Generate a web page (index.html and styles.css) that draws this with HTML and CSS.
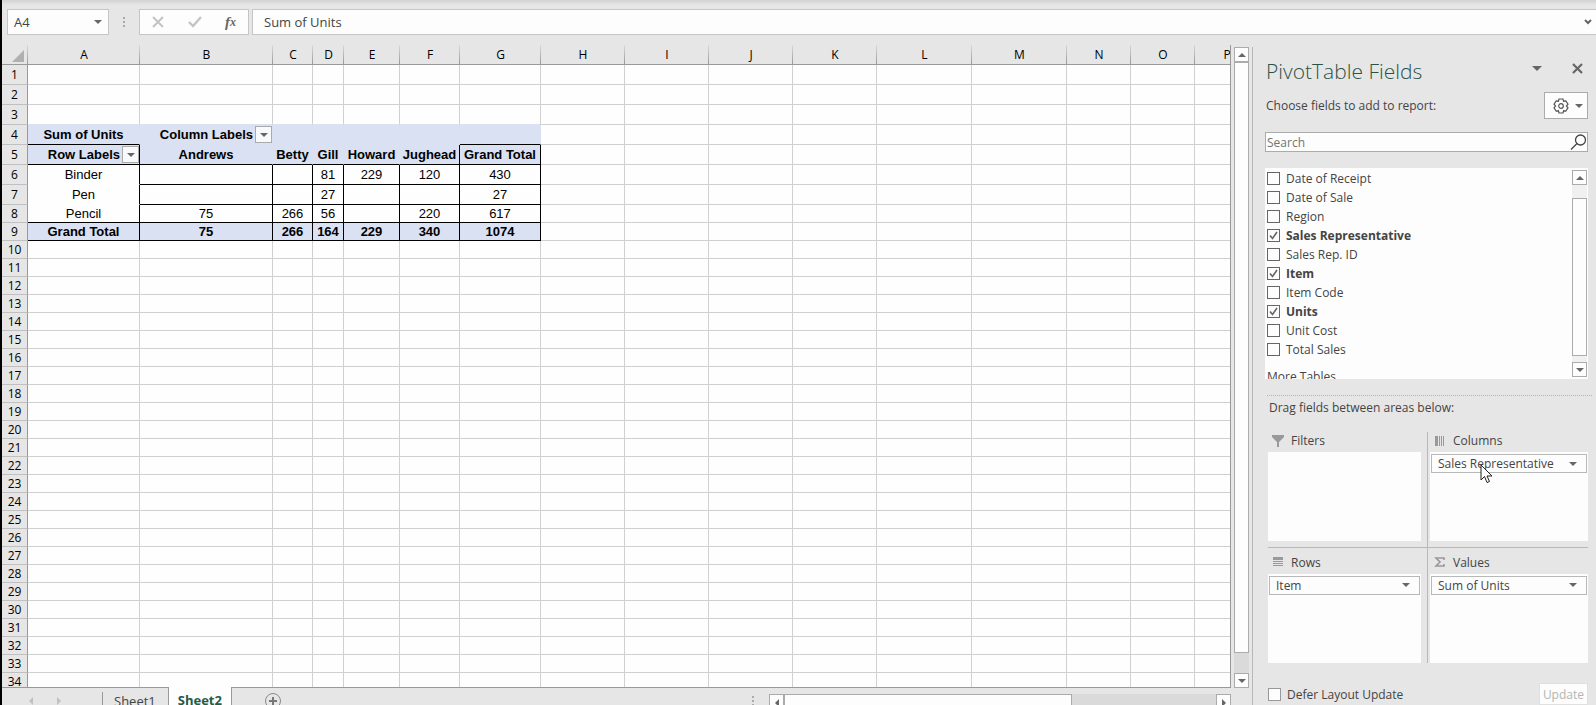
FILE: index.html
```html
<!DOCTYPE html>
<html lang="en">
<head>
  <meta charset="UTF-8">
  <meta name="viewport" content="width=device-width, initial-scale=1.0">
  <title>PivotTable Fields</title>
  <link rel="stylesheet" href="styles.css">
</head>
<body>
  <!-- Formula bar -->
  <header class="formula-bar">
    <div class="name-box">
      <input class="name-input" type="text" value="A4" aria-label="Name box">
      <button class="plain-btn" type="button" aria-label="Open name list"><span class="caret"></span></button>
    </div>
    <div class="dots"><span></span><span></span><span></span></div>
    <div class="formula-buttons">
      <button class="plain-btn" type="button" aria-label="Cancel">
        <svg width="12" height="12" viewBox="0 0 12 12"><path d="M1 1L11 11M11 1L1 11" stroke="#c4c4c4" stroke-width="2" fill="none"/></svg>
      </button>
      <button class="plain-btn" type="button" aria-label="Enter">
        <svg width="14" height="12" viewBox="0 0 14 12"><path d="M1 6L5 10L13 1" stroke="#c4c4c4" stroke-width="2.4" fill="none"/></svg>
      </button>
      <button class="plain-btn fx" type="button" aria-label="Insert function">f<small>x</small></button>
    </div>
    <div class="formula-field">
      <input class="formula-input" type="text" value="Sum of Units" aria-label="Formula">
      <button class="plain-btn" type="button" aria-label="Expand formula bar">
        <svg width="8" height="6" viewBox="0 0 8 6"><path d="M1 1L4 4L7 1" stroke="#666" stroke-width="2" fill="none"/></svg>
      </button>
    </div>
  </header>

  <main class="main">
    <section class="workbook">
      <div class="grid-area">
        <div class="grid-wrap">
          <table class="sheet">
            <colgroup id="cols"></colgroup>
            <thead><tr id="letters"></tr></thead>
            <tbody id="rows"></tbody>
          </table>
        </div>
        <div class="scroll-y">
          <button class="scroll-btn" type="button" aria-label="Scroll up"><span class="tri up"></span></button>
          <div class="thumb-y"></div>
          <button class="scroll-btn" type="button" aria-label="Scroll down"><span class="tri down"></span></button>
        </div>
      </div>

      <!-- Sheet tabs -->
      <footer class="tab-bar">
        <div class="tab-nav">
          <button class="plain-btn" type="button" aria-label="Previous sheet"><span class="tri left faint"></span></button>
          <button class="plain-btn" type="button" aria-label="Next sheet"><span class="tri right faint"></span></button>
        </div>
        <button class="tab" type="button">Sheet1</button>
        <button class="tab active" type="button">Sheet2</button>
        <div class="tab-rest">
          <button class="plain-btn" type="button" aria-label="New sheet">
            <svg width="18" height="18" viewBox="0 0 18 18"><circle cx="9" cy="9" r="7.5" fill="none" stroke="#8a8a8a"/><path d="M9 5V13M5 9H13" stroke="#777" stroke-width="2"/></svg>
          </button>
          <div class="dots tab-dots"><span></span><span></span><span></span></div>
          <div class="scroll-x">
            <button class="scroll-btn" type="button" aria-label="Scroll left"><span class="tri left"></span></button>
            <div class="thumb-x"></div>
            <button class="scroll-btn" type="button" aria-label="Scroll right"><span class="tri right"></span></button>
          </div>
        </div>
      </footer>
    </section>

    <!-- Field list pane -->
    <aside class="pane">
      <div class="pane-head">
        <h1>PivotTable Fields</h1>
        <button class="plain-btn" type="button" aria-label="Pane options"><span class="caret big"></span></button>
        <button class="plain-btn" type="button" aria-label="Close pane">
          <svg width="11" height="11" viewBox="0 0 11 11"><path d="M1 1L10 10M10 1L1 10" stroke="#666" stroke-width="2.2"/></svg>
        </button>
      </div>

      <div class="choose">
        <span>Choose fields to add to report:</span>
        <button class="tools-btn" type="button" aria-label="Tools">
          <svg width="16" height="16" viewBox="0 0 16 16" fill="none" stroke="#555" stroke-width="1.2"><path d="M6 1H10L10.6 3.2L12.8 2.8L15 6.2L13.4 8L15 9.8L12.8 13.2L10.6 12.8L10 15H6L5.4 12.8L3.2 13.2L1 9.8L2.6 8L1 6.2L3.2 2.8L5.4 3.2Z"/><circle cx="8" cy="8" r="2.3"/></svg>
          <span class="caret"></span>
        </button>
      </div>

      <div class="search">
        <input type="search" placeholder="Search" aria-label="Search fields">
        <svg width="17" height="17" viewBox="0 0 17 17" fill="none" stroke="#444" stroke-width="1.3"><circle cx="10.5" cy="6" r="5"/><path d="M7 9.5L1 15.5"/></svg>
      </div>

      <div class="field-list">
        <div class="fields">
          <label><input type="checkbox"> Date of Receipt</label>
          <label><input type="checkbox"> Date of Sale</label>
          <label><input type="checkbox"> Region</label>
          <label class="on"><input type="checkbox" checked> Sales Representative</label>
          <label><input type="checkbox"> Sales Rep. ID</label>
          <label class="on"><input type="checkbox" checked> Item</label>
          <label><input type="checkbox"> Item Code</label>
          <label class="on"><input type="checkbox" checked> Units</label>
          <label><input type="checkbox"> Unit Cost</label>
          <label><input type="checkbox"> Total Sales</label>
          <a class="more" href="#">More Tables</a>
        </div>
        <div class="list-scroll">
          <button class="scroll-btn" type="button" aria-label="Scroll fields up"><span class="tri up"></span></button>
          <div class="list-thumb"></div>
          <button class="scroll-btn" type="button" aria-label="Scroll fields down"><span class="tri down"></span></button>
        </div>
      </div>

      <p class="drag">Drag fields between areas below:</p>

      <div class="areas">
        <section class="area">
          <h2><svg width="12" height="12" viewBox="0 0 12 12"><path d="M0 0H12V2L7 7V12H5V7L0 2Z" fill="#999"/></svg>Filters</h2>
          <div class="drop"></div>
        </section>
        <section class="area">
          <h2><svg width="12" height="12" viewBox="0 0 12 12" fill="#999"><path d="M1 1H4V11H1ZM5 1H6V11H5ZM7 1H8V11H7ZM9 1H10V11H9Z"/></svg>Columns</h2>
          <div class="drop">
            <button class="chip" type="button">Sales Representative<span class="caret"></span></button>
            <svg class="pointer" width="13" height="20" viewBox="0 0 13 20"><path d="M1 1V16L4.500 12.500L7 18.500L9.500 17.500L7 12H12Z" fill="#fff" stroke="#222"/></svg>
          </div>
        </section>
        <section class="area">
          <h2><svg width="12" height="12" viewBox="0 0 12 12" fill="#999"><path d="M1 1H11V4H1ZM1 5H11V6H1ZM1 7H11V8H1ZM1 9H11V10H1Z"/></svg>Rows</h2>
          <div class="drop"><button class="chip" type="button">Item<span class="caret"></span></button></div>
        </section>
        <section class="area">
          <h2><svg width="12" height="12" viewBox="0 0 12 12"><path d="M10 4V2H2L6 6L2 10H10V8" fill="none" stroke="#999" stroke-width="1.600"/></svg>Values</h2>
          <div class="drop"><button class="chip" type="button">Sum of Units<span class="caret"></span></button></div>
        </section>
      </div>

      <div class="pane-foot">
        <label><input type="checkbox"> Defer Layout Update</label>
        <button class="update-btn" type="button" disabled>Update</button>
      </div>
    </aside>
  </main>

  <script src="script.js"></script>
</body>
</html>
```
FILE: styles.css
```css
* {
  box-sizing: border-box;
}

body {
  margin: 0;
  height: 100vh;
  display: flex;
  flex-direction: column;
  overflow: hidden;
  border-left: 2px solid #000;
  background-color: #e6e6e6;
  color: #444;
  font-family: "Open Sans", "Noto Sans", sans-serif;
  font-size: 12px;
}

button, input {
  font-family: inherit;
  font-size: inherit;
  color: inherit;
}

.plain-btn {
  display: flex;
  align-items: center;
  justify-content: center;
  padding: 0;
  border: none;
  background: none;
}

.caret {
  border: 4px solid transparent;
  border-top-color: #666;
  border-bottom: none;
}

.caret.big {
  border-width: 5px;
  border-bottom: none;
}

.tri {
  border: 4px solid transparent;
}

.tri.up {
  border-bottom-color: #666;
  border-top: none;
}

.tri.down {
  border-top-color: #666;
  border-bottom: none;
}

.tri.left {
  border-right-color: #666;
  border-left: none;
}

.tri.right {
  border-left-color: #666;
  border-right: none;
}

.tri.left.faint {
  border-right-color: #c0c0c0;
}

.tri.right.faint {
  border-left-color: #c0c0c0;
}

.dots {
  display: flex;
  flex-direction: column;
  gap: 2px;
}

.dots span {
  width: 2px;
  height: 2px;
  background-color: #aaa;
}

/* Formula bar */
.formula-bar {
  display: flex;
  align-items: flex-start;
  flex: none;
  height: 45px;
  padding: 9px 0 0 5px;
  background: linear-gradient(#d2d2d2, #e6e6e6 5px);
}

.name-box, .formula-buttons, .formula-field {
  display: flex;
  align-items: center;
  height: 26px;
  border: 1px solid #c6c6c6;
  background-color: #fdfdfd;
  font-size: 13px;
}

.name-box {
  width: 102px;
  padding: 0 6px;
}

.name-input, .formula-input {
  min-width: 0;
  flex: 1;
  padding: 0;
  border: none;
  background: none;
}

.formula-bar .dots {
  margin: 8px 14px;
}

.formula-buttons {
  width: 110px;
  justify-content: space-between;
  padding: 0 12px;
}

.fx {
  font-family: "Liberation Serif", serif;
  font-style: italic;
  font-weight: bold;
  font-size: 15px;
  color: #666;
}

.fx small {
  font-size: 12px;
}

.formula-field {
  flex: 1;
  margin-left: 3px;
  padding: 0 4px 0 11px;
  border-right: none;
}

/* Worksheet */
.main {
  display: flex;
  flex: 1;
  min-height: 0;
}

.workbook {
  display: flex;
  flex-direction: column;
  flex: 1;
  min-width: 0;
}

.grid-area {
  display: flex;
  flex: 1;
  min-height: 0;
}

.grid-wrap {
  flex: 1;
  min-width: 0;
  overflow: hidden;
  border-right: 1px solid #999;
  border-bottom: 1px solid #999;
}

.sheet {
  width: 1232px;
  table-layout: fixed;
  border-collapse: separate;
  border-spacing: 0;
  font-size: 13px;
  color: #000;
}

.sheet tr {
  height: 18px;
}

.sheet tr.tall {
  height: 20px;
}

.sheet thead tr {
  height: 20px;
}

.sheet th, .sheet td {
  padding: 0;
  overflow: hidden;
  white-space: nowrap;
  text-align: center;
  line-height: 16px;
  font-weight: normal;
}

.sheet th {
  border-right: 1px solid #999;
  border-bottom: 1px solid #c0c0c0;
  background-color: #e6e6e6;
  font-size: 12px;
}

.sheet thead th {
  border-bottom-color: #999;
  border-right: none;
  background-image: linear-gradient(#d8d8d8, #999);
  background-size: 1px 100%;
  background-position: right;
  background-repeat: no-repeat;
}

.sheet td {
  border-right: 1px solid #d0d0d0;
  border-bottom: 1px solid #d0d0d0;
  background-color: #fefefe;
  font-family: "Liberation Sans", Arial, sans-serif;
}

.corner svg {
  display: block;
  margin: 2px 4px 0 auto;
}

.sheet td.fill {
  border-color: #d9e1f2;
  background-color: #d9e1f2;
  font-weight: bold;
}

.sheet td.above-fill {
  border-bottom-color: #d9e1f2;
}

.sheet td.white-line {
  border-bottom-color: #fefefe;
}

.sheet td.line-right {
  border-right-color: #000;
}

.sheet td.line-bottom {
  border-bottom-color: #000;
}

.with-filter {
  display: flex;
  align-items: center;
  justify-content: flex-end;
  gap: 2px;
}

.filter-btn {
  display: flex;
  align-items: center;
  justify-content: center;
  width: 17px;
  height: 17px;
  padding: 0;
  border: 1px solid #aaa;
  background-color: #f8f9fb;
}

/* Scroll bars */
.scroll-y {
  display: flex;
  flex-direction: column;
  width: 15px;
  margin: 2px 3px 0;
  background-color: #dadada;
}

.scroll-btn {
  display: flex;
  align-items: center;
  justify-content: center;
  flex: none;
  width: 15px;
  height: 15px;
  padding: 0;
  border: 1px solid #ababab;
  background-color: #fdfdfd;
}

.thumb-y {
  flex: 1;
  margin-bottom: 20px;
  border: 1px solid #ababab;
  background-color: #fdfdfd;
}

/* Sheet tabs */
.tab-bar {
  display: flex;
  flex: none;
  height: 17px;
  padding-right: 21px;
}

.tab-nav {
  display: flex;
  gap: 24px;
  width: 100px;
  height: 25px;
  padding-left: 27px;
}

.tab {
  height: 25px;
  padding: 0 12px;
  border: none;
  border-right: 1px solid #999;
  background: linear-gradient(#999, #999) 0 4px / 1px 100% no-repeat;
  font-size: 13px;
}

.tab.active {
  margin-top: -1px;
  height: 26px;
  padding: 0 9px;
  background: #fefefe;
  color: #215c47;
  font-weight: bold;
}

.tab-rest {
  display: flex;
  flex: 1;
  height: 25px;
  padding-left: 32px;
}

.tab-dots {
  margin: 8px 15px 0 auto;
}

.scroll-x {
  display: flex;
  width: 462px;
  height: 17px;
  margin-top: 6px;
  background-color: #dadada;
}

.scroll-x .scroll-btn {
  height: 17px;
}

.thumb-x {
  flex: 1;
  margin-right: 144px;
  border: 1px solid #ababab;
  background-color: #fdfdfd;
}

/* Field list pane */
.pane {
  display: flex;
  flex-direction: column;
  flex: none;
  width: 344px;
  margin-top: 2px;
  padding: 10px 8px 0 12px;
  border-left: 1px solid #b8b8b8;
}

.pane-head {
  display: flex;
  gap: 30px;
  height: 28px;
  padding: 0 5px 0 1px;
}

.pane-head .plain-btn {
  height: 22px;
}

.pane-head h1 {
  flex: 1;
  margin: 0;
  color: #2b5246;
  font-size: 21px;
  font-weight: 300;
  line-height: 28px;
}

.choose {
  display: flex;
  align-items: center;
  justify-content: space-between;
  margin-top: 7px;
  padding-left: 1px;
}

.tools-btn {
  display: flex;
  align-items: center;
  justify-content: space-between;
  width: 44px;
  height: 27px;
  padding: 0 4px 0 8px;
  border: 1px solid #ababab;
  background-color: #fdfdfd;
}

.search {
  display: flex;
  align-items: center;
  height: 20px;
  margin-top: 13px;
  border: 1px solid #ababab;
  background-color: #fdfdfd;
}

.search input {
  flex: 1;
  min-width: 0;
  height: 16px;
  padding: 0 1px;
  border: none;
  background: none;
}

.search input::placeholder {
  color: #6f7670;
}

.field-list {
  display: flex;
  justify-content: space-between;
  height: 211px;
  margin-top: 16px;
  overflow: hidden;
  background-color: #fdfdfd;
}

.fields {
  padding: 1px 0 0 2px;
}

.fields label, .pane-foot label {
  display: flex;
  align-items: center;
  gap: 6px;
  height: 19px;
}

.fields .on {
  font-weight: bold;
}

.pane input[type="checkbox"] {
  appearance: none;
  width: 13px;
  height: 13px;
  margin: 0;
  border: 1px solid #666;
  background-color: #fdfdfd;
}

.pane input[type="checkbox"]:checked {
  background-image: url("data:image/svg+xml,%3Csvg xmlns='http://www.w3.org/2000/svg' viewBox='0 0 11 11'%3E%3Cpath d='M2 5.500L4.500 8.500L9 2' fill='none' stroke='%23666' stroke-width='1.600'/%3E%3C/svg%3E");
}

.more {
  display: block;
  margin-top: 9px;
  color: inherit;
  text-decoration: none;
}

.list-scroll {
  display: flex;
  flex-direction: column;
  margin: 2px 1px;
  background-color: #f0f0f0;
}

.list-thumb {
  flex: 1;
  margin: 13px 0 6px;
  border: 1px solid #ababab;
  background-color: #fdfdfd;
}

.drag {
  margin: 16px -4px 0 2px;
  padding: 3px 0 15px 2px;
  border-top: 1px dotted #b4b4b4;
  line-height: 18px;
}

.areas {
  display: grid;
  grid-template-columns: 1fr 1fr;
  grid-template-rows: 1fr 1fr;
  flex: 1;
  min-height: 0;
  margin-left: 3px;
}

.area {
  display: flex;
  flex-direction: column;
}

.area:nth-child(odd) {
  padding-right: 6px;
  border-right: 1px solid #b8b8b8;
}

.area:nth-child(even) {
  padding-left: 2px;
}

.area:nth-child(-n+2) {
  padding-bottom: 6px;
  border-bottom: 1px solid #b8b8b8;
}

.area:nth-child(n+3) {
  padding-top: 6px;
}

.area h2 {
  display: flex;
  align-items: center;
  gap: 7px;
  height: 20px;
  margin: 0;
  padding: 0 0 3px 4px;
  font-size: 12px;
  font-weight: normal;
}

.drop {
  position: relative;
  flex: 1;
  padding: 2px 1px;
  background-color: #fdfdfd;
}

.chip {
  display: flex;
  align-items: center;
  justify-content: space-between;
  width: 100%;
  height: 19px;
  padding: 0 9px 0 6px;
  border: 1px solid #b8b8b8;
  background-color: #fdfdfd;
}

.pointer {
  position: absolute;
  left: 50px;
  top: 12px;
}

.pane-foot {
  display: flex;
  align-items: center;
  justify-content: space-between;
  margin-top: 20px;
  padding-left: 3px;
}

.pane-foot input[type="checkbox"] {
  border-color: #999;
}

.update-btn {
  height: 22px;
  padding: 0 3px;
  border: 1px solid #e0e0e0;
  background-color: #fdfdfd;
  color: #b1b6b1;
}
```
FILE: script.js
```js
const letters = 'ABCDEFGHIJKLMNOP'.split('');
const widths = [112, 133, 40, 31, 56, 60, 81, 84, 84, 84, 84, 95, 95, 64, 64, 64];

// Cell text of the pivot table, keyed by row number
const pivot = {
  4: ['Sum of Units', 'Column Labels'],
  5: ['Row Labels', 'Andrews', 'Betty', 'Gill', 'Howard', 'Jughead', 'Grand Total'],
  6: ['Binder', '', '', '81', '229', '120', '430'],
  7: ['Pen', '', '', '27', '', '', '27'],
  8: ['Pencil', '75', '266', '56', '', '220', '617'],
  9: ['Grand Total', '75', '266', '164', '229', '340', '1074']
};

function cellClass(row, col) {
  const names = [];
  if (col > 6 || row > 9) return '';
  if (row === 3) names.push('above-fill');
  if (row === 4 || row === 5 || row === 9) names.push('fill');
  if (row === 4 && (col === 0 || col === 6)) names.push('line-bottom');
  if (row === 5) {
    names.push('line-bottom');
    if (col === 0 || col >= 5) names.push('line-right');
  }
  if (row >= 6) {
    names.push('line-right');
    names.push(col === 0 && row < 8 ? 'white-line' : 'line-bottom');
  }
  return names.join(' ');
}

const cols = document.getElementById('cols');
cols.innerHTML = '<col style="width: 26px">' + widths.map(w => `<col style="width: ${w}px">`).join('');

document.getElementById('letters').innerHTML =
  '<th class="corner"><svg width="12" height="12"><path d="M12 0V12H0Z" fill="#b0b0b0"/></svg></th>' +
  letters.map(l => `<th scope="col">${l}</th>`).join('');

let html = '';
for (let row = 1; row <= 34; row++) {
  html += `<tr class="${row < 8 ? 'tall' : ''}"><th scope="row">${row}</th>`;
  for (let col = 0; col < letters.length; col++) {
    let text = (pivot[row] && pivot[row][col]) || '';
    if (text.endsWith('Labels')) {
      text = `<div class="with-filter">${text}<button class="filter-btn" type="button" aria-label="Filter ${text}"><span class="caret"></span></button></div>`;
    }
    html += `<td class="${cellClass(row, col)}">${text}</td>`;
  }
  html += '</tr>';
}
document.getElementById('rows').innerHTML = html;
```
